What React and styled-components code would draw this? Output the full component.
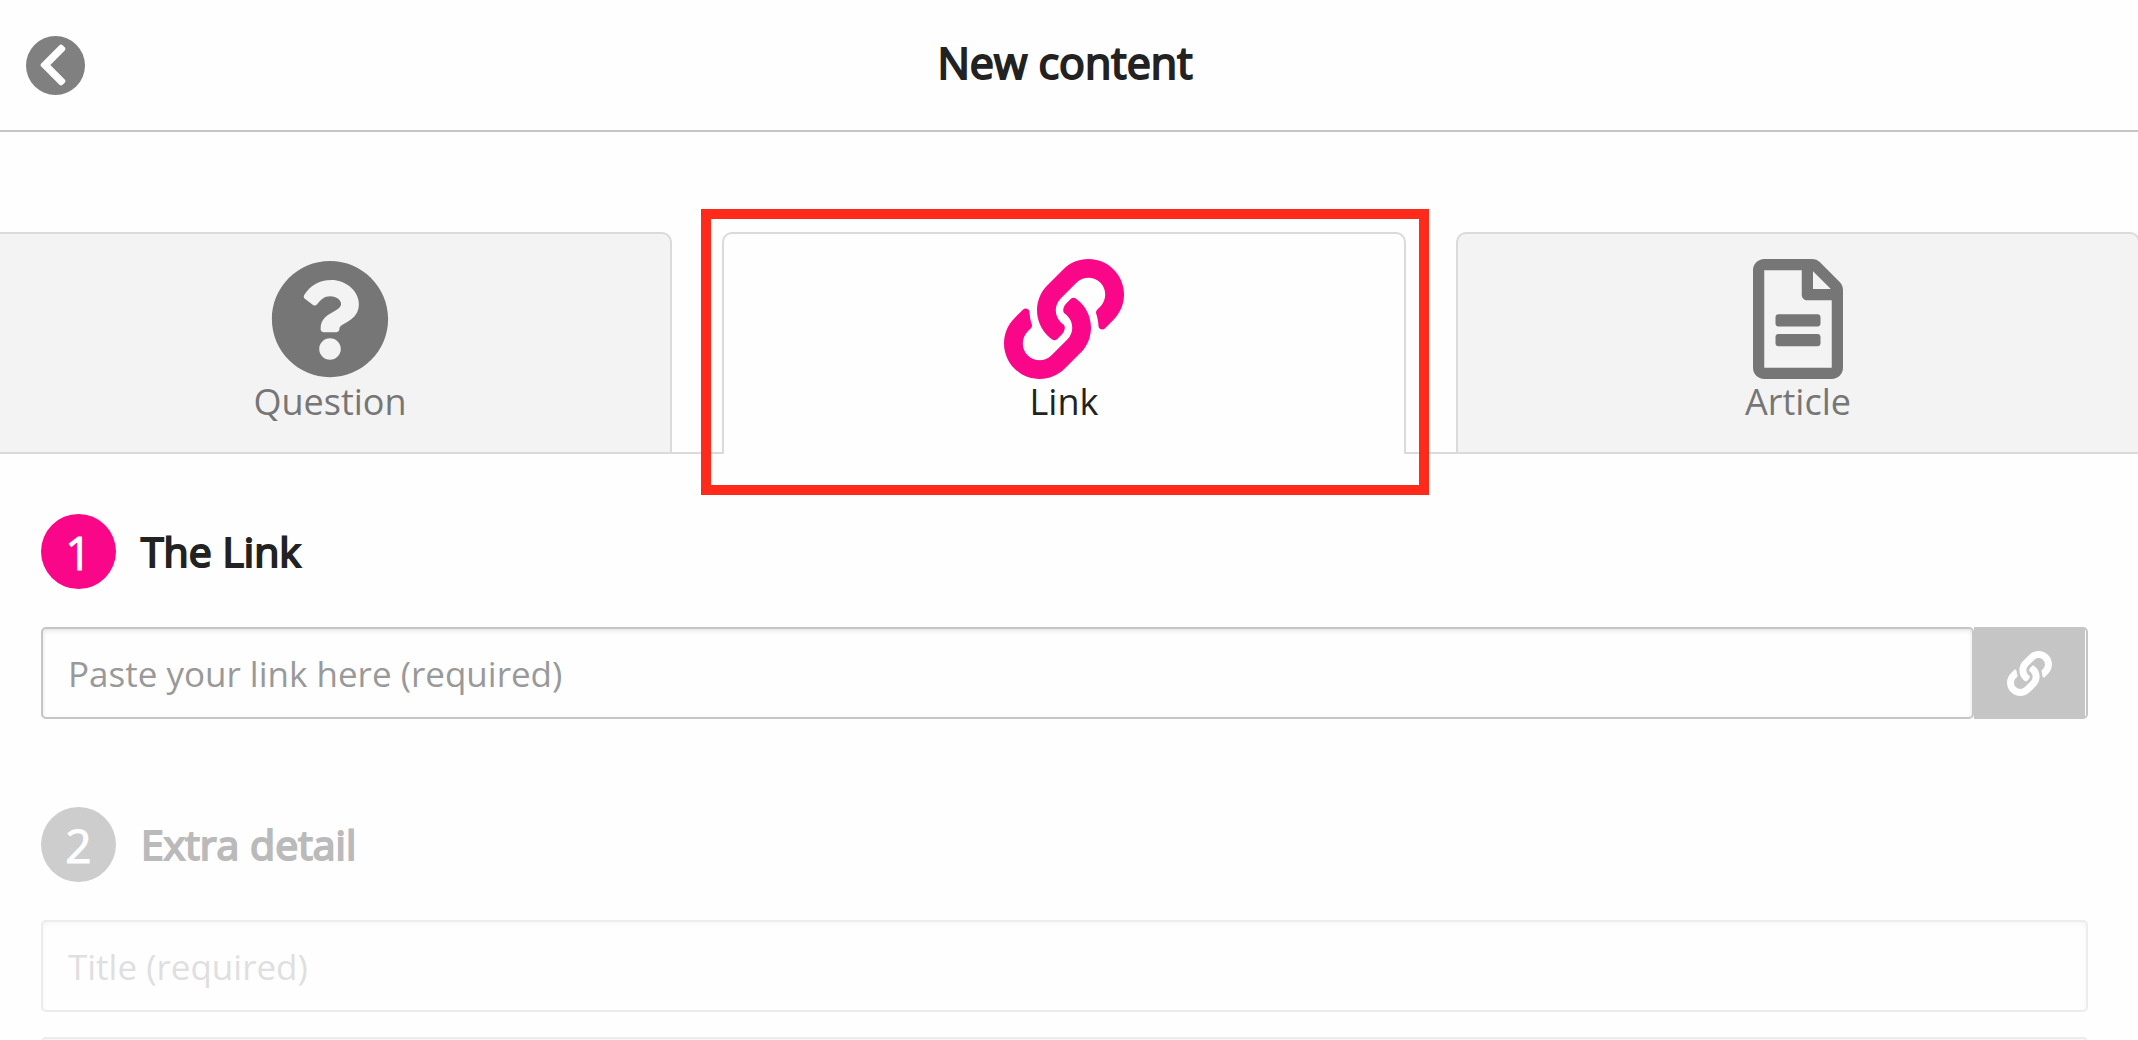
import { useState } from "react";
import styled, { createGlobalStyle } from "styled-components";
import {
  FaChevronLeft,
  FaLink,
  FaQuestionCircle,
  FaRegFileAlt,
} from "react-icons/fa";

const tabs = [
  { id: "question", label: "Question", Icon: FaQuestionCircle },
  { id: "link", label: "Link", Icon: FaLink, highlighted: true },
  { id: "article", label: "Article", Icon: FaRegFileAlt },
];

export default function App() {
  const [activeTab, setActiveTab] = useState("link");

  return (
    <>
      <GlobalStyle />
      <StyledPage>
        <StyledHeader>
          <StyledBackButton type="button" aria-label="Back">
            <FaChevronLeft />
          </StyledBackButton>
          <StyledTitle>New content</StyledTitle>
        </StyledHeader>

        <StyledTabList role="tablist">
          {tabs.map(({ id, label, Icon, highlighted }) => (
            <StyledTab
              key={id}
              type="button"
              role="tab"
              aria-selected={activeTab === id}
              $active={activeTab === id}
              onClick={() => setActiveTab(id)}
            >
              <Icon />
              <StyledTabLabel>{label}</StyledTabLabel>
              {highlighted && <StyledHighlight />}
            </StyledTab>
          ))}
        </StyledTabList>

        <StyledForm>
          <StyledStep>
            <StyledStepHeader>
              <StyledStepNumber>1</StyledStepNumber>
              <StyledStepTitle>The Link</StyledStepTitle>
            </StyledStepHeader>
            <StyledInputGroup>
              <StyledInput
                name="url"
                aria-label="Link"
                placeholder="Paste your link here (required)"
              />
              <StyledAddon>
                <StyledLinkButton type="button" aria-label="Fetch link">
                  <FaLink />
                </StyledLinkButton>
              </StyledAddon>
            </StyledInputGroup>
          </StyledStep>

          <StyledStep>
            <StyledStepHeader $disabled>
              <StyledStepNumber $disabled>2</StyledStepNumber>
              <StyledStepTitle>Extra detail</StyledStepTitle>
            </StyledStepHeader>
            <StyledFields>
              <StyledInput
                name="title"
                aria-label="Title"
                placeholder="Title (required)"
                disabled
              />
              <StyledInput name="description" aria-label="Description" disabled />
            </StyledFields>
          </StyledStep>
        </StyledForm>
      </StyledPage>
    </>
  );
}

const GlobalStyle = createGlobalStyle`
  *,
  *::before,
  *::after {
    box-sizing: border-box;
  }

  body {
    margin: 0;
    overflow: hidden;
    background-color: #fefefe;
    color: #222;
    font-family: "Open Sans", sans-serif;
  }

  button,
  input {
    font-family: inherit;
  }
`;

const StyledPage = styled.div`
  height: 100vh;
  overflow: hidden;
`;

const StyledHeader = styled.header`
  display: grid;
  grid-template-columns: 60px 1fr 60px;
  align-items: center;
  height: 132px;
  padding: 0 34px 0 26px;
  border-bottom: 2px solid #c5c5c5;
`;

const StyledBackButton = styled.button`
  display: flex;
  align-items: center;
  justify-content: center;
  width: 59px;
  height: 59px;
  padding: 0 6px 0 0;
  border: none;
  border-radius: 50%;
  background-color: #808080;
  color: #fefefe;
  font-size: 48px;
  cursor: pointer;
`;

const StyledTitle = styled.h1`
  margin: 0;
  padding-bottom: 4px;
  font-size: 43px;
  font-weight: 400;
  line-height: 60px;
  text-align: center;
  -webkit-text-stroke: 2px currentColor;
`;

const StyledTabList = styled.div`
  display: flex;
  gap: 50px;
  margin: 100px -2px 0 -12px;
  border-bottom: 2px solid #dadada;
`;

const StyledTab = styled.button`
  position: relative;
  display: flex;
  flex: 1;
  flex-direction: column;
  align-items: center;
  height: ${({ $active }) => ($active ? "222px" : "220px")};
  margin-bottom: ${({ $active }) => ($active ? "-2px" : "0")};
  padding: 25px 0 0;
  border: 2px solid #dadada;
  border-bottom: none;
  border-radius: 10px 10px 0 0;
  background-color: ${({ $active }) => ($active ? "#fefefe" : "#f3f3f3")};
  color: ${({ $active }) => ($active ? "#222" : "#767676")};
  cursor: pointer;

  svg {
    flex: none;
    width: 120px;
    height: 120px;
    color: ${({ $active }) => ($active ? "#f90689" : "#767676")};
  }
`;

const StyledTabLabel = styled.span`
  font-size: 36px;
  line-height: 46px;
`;

const StyledHighlight = styled.span`
  position: absolute;
  z-index: 1;
  top: -25px;
  right: -25px;
  bottom: -41px;
  left: -23px;
  border: 10px solid #ff2a19;
  pointer-events: none;
`;

const StyledForm = styled.form`
  display: flex;
  flex-direction: column;
  gap: 88px;
  padding: 60px 50px 0 41px;
`;

const StyledStep = styled.section`
  display: flex;
  flex-direction: column;
  gap: 38px;
`;

const StyledStepHeader = styled.div`
  display: flex;
  align-items: center;
  gap: 25px;
  color: ${({ $disabled }) => ($disabled ? "#bababa" : "#222")};
`;

const StyledStepNumber = styled.span`
  width: 75px;
  height: 75px;
  border-radius: 50%;
  background-color: ${({ $disabled }) => ($disabled ? "#cdcdcd" : "#f90689")};
  color: #fefefe;
  font-size: 46px;
  line-height: 77px;
  text-align: center;
  -webkit-text-stroke: 1px currentColor;
`;

const StyledStepTitle = styled.h2`
  margin: 0;
  padding-bottom: 2px;
  font-size: 41px;
  font-weight: 400;
  line-height: 60px;
  -webkit-text-stroke: 2px currentColor;
`;

const StyledInputGroup = styled.div`
  display: flex;
`;

const StyledFields = styled.div`
  display: flex;
  flex-direction: column;
  gap: 25px;
`;

const StyledInput = styled.input`
  flex: none;
  width: 100%;
  height: 92px;
  padding: 0 25px;
  border: 2px solid #c5c5c5;
  border-radius: 5px;
  background-color: #fefefe;
  box-shadow: inset 0 2px 4px rgba(0, 0, 0, 0.1);
  font-size: 35px;

  ${StyledInputGroup} & {
    flex: 1;
    width: auto;
    min-width: 0;
  }

  &::placeholder {
    color: #999;
    opacity: 1;
  }

  &:disabled {
    opacity: 0.3;
  }
`;

const StyledAddon = styled.div`
  width: 114px;
  padding-right: 1px;
  border: 2px solid #c5c5c5;
  border-left: none;
  border-radius: 0 5px 5px 0;
`;

const StyledLinkButton = styled.button`
  display: flex;
  align-items: center;
  justify-content: center;
  width: 100%;
  height: 100%;
  padding: 0;
  border: none;
  background-color: #c5c5c5;
  color: #fefefe;
  font-size: 45px;
  cursor: pointer;
`;
